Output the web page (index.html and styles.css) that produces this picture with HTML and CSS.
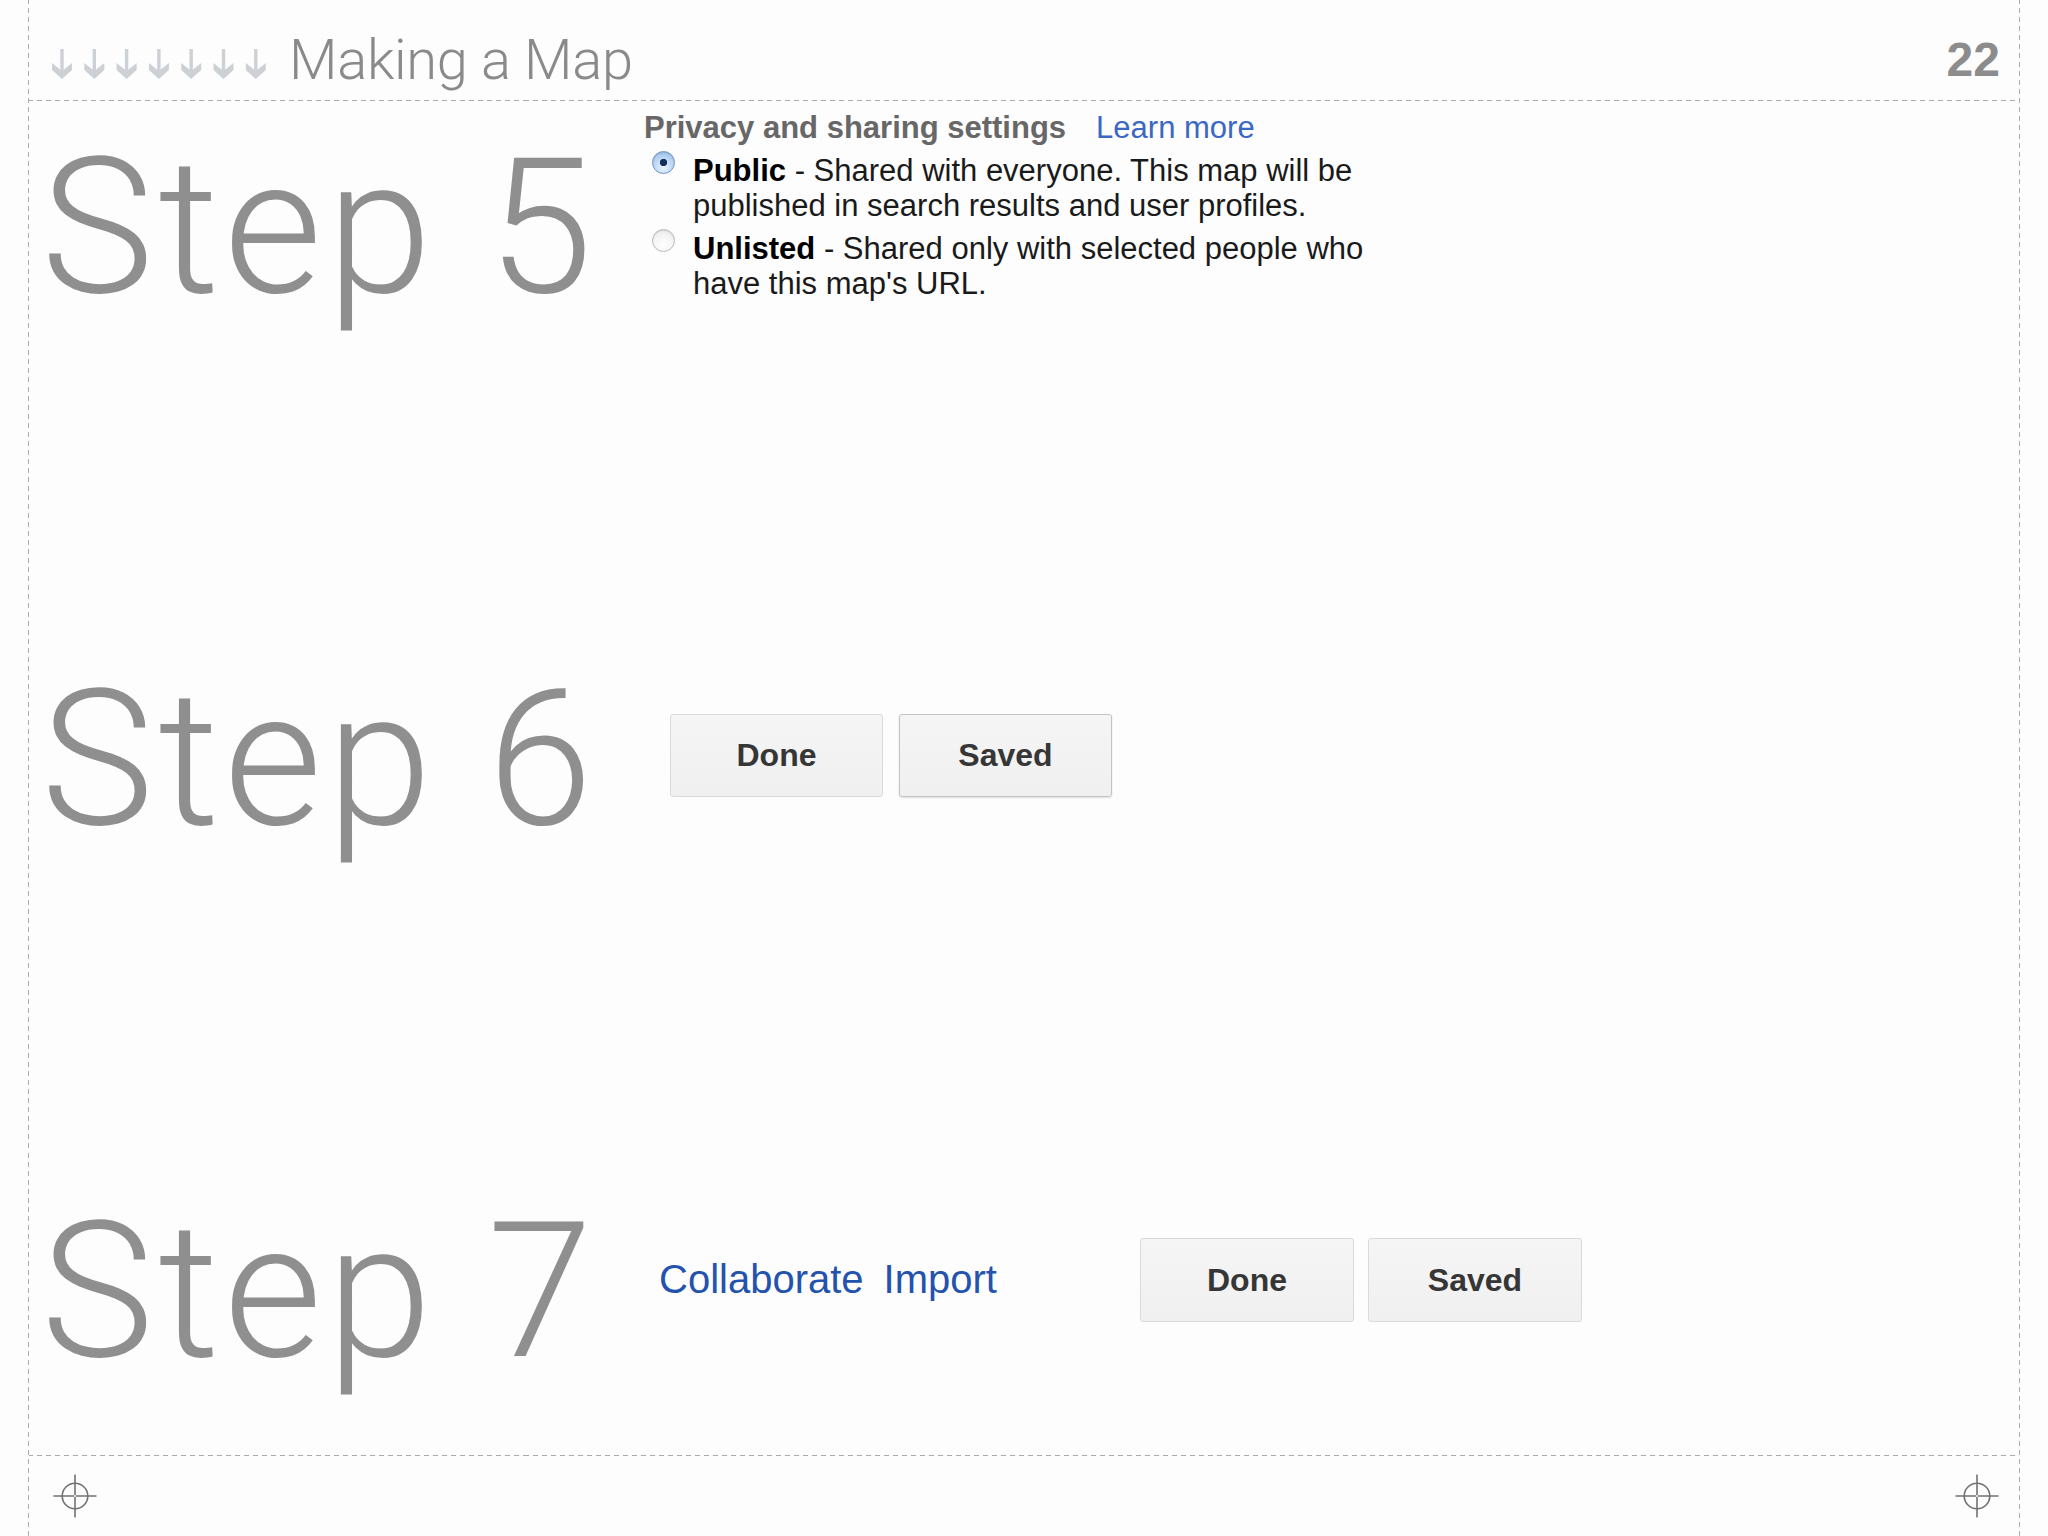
FILE: index.html
```html
<!DOCTYPE html>
<html lang="en">
<head>
<meta charset="utf-8">
<title>Making a Map — 22</title>
<link rel="stylesheet" href="styles.css">
</head>
<body>
<div class="slide">
  <header class="header">
    <svg class="arrows" width="214" height="30" viewBox="0 0 214 30" aria-hidden="true">
      <defs>
        <g id="arr">
          <rect x="8.3" y="0" width="3.4" height="25" />
          <polygon points="0,14 10,22 20,14 20,21 10,30 0,21" />
        </g>
      </defs>
      <g fill="#cdd1d6">
        <use href="#arr" x="0"/>
        <use href="#arr" x="32.3"/>
        <use href="#arr" x="64.6"/>
        <use href="#arr" x="96.9"/>
        <use href="#arr" x="129.2"/>
        <use href="#arr" x="161.5"/>
        <use href="#arr" x="193.8"/>
      </g>
    </svg>
    <h1 class="title">Making a Map</h1>
    <div class="page-num">22</div>
  </header>

  <main class="content">
    <section class="row row-5">
      <div class="label">Step 5</div>
      <div class="privacy">
        <div class="privacy-head"><span>Privacy and sharing settings</span><a class="learn">Learn more</a></div>
        <div class="option">
          <span class="radio checked"></span>
          <div class="option-text">
            <span class="line"><b>Public</b><span> - Shared with everyone. This map will be</span></span>
            <span class="line">published in search results and user profiles.</span>
          </div>
        </div>
        <div class="option">
          <span class="radio"></span>
          <div class="option-text">
            <span class="line"><b>Unlisted</b><span> - Shared only with selected people who</span></span>
            <span class="line">have this map's URL.</span>
          </div>
        </div>
      </div>
    </section>

    <section class="row row-6">
      <div class="label">Step 6</div>
      <div class="buttons buttons-6">
        <button class="btn">Done</button>
        <button class="btn btn-saved">Saved</button>
      </div>
    </section>

    <section class="row row-7">
      <div class="label">Step 7</div>
      <div class="step7">
        <div class="links">
          <a class="link">Collaborate</a>
          <a class="link">Import</a>
        </div>
        <div class="buttons buttons-7">
          <button class="btn">Done</button>
          <button class="btn">Saved</button>
        </div>
      </div>
    </section>
  </main>

  <footer class="footer">
    <svg class="cross" width="44" height="44" viewBox="0 0 44 44" aria-hidden="true">
      <circle cx="22" cy="22" r="12.8" fill="none" stroke="#727272" stroke-width="1.6"/>
      <path d="M22 0.5v43M0.5 22h43" stroke="#727272" stroke-width="1.6"/>
      <circle cx="22" cy="22" r="1" fill="#fdfdfd"/>
    </svg>
    <svg class="cross" width="44" height="44" viewBox="0 0 44 44" aria-hidden="true">
      <circle cx="22" cy="22" r="12.8" fill="none" stroke="#727272" stroke-width="1.6"/>
      <path d="M22 0.5v43M0.5 22h43" stroke="#727272" stroke-width="1.6"/>
      <circle cx="22" cy="22" r="1" fill="#fdfdfd"/>
    </svg>
  </footer>
</div>
</body>
</html>
```

FILE: styles.css
```css
* {
  box-sizing: border-box;
}

html, body {
  margin: 0;
  padding: 0;
  background: #fdfdfd;
}

body {
  width: 2048px;
  height: 1536px;
  overflow: hidden;
  font-family: "Liberation Sans", Arial, sans-serif;
}

.slide {
  margin-left: 28px;
  width: 1992px;
  height: 1536px;
  border-style: solid;
  border-width: 0 1px;
  border-image: repeating-linear-gradient(to bottom, #ababab 0 5px, transparent 5px 9px) 1;
  display: flex;
  flex-direction: column;
}

/* ---------- header ---------- */
.header {
  height: 101px;
  flex: none;
  border-style: solid;
  border-width: 0 0 1px 0;
  border-image: repeating-linear-gradient(to right, #ababab 0 5px, transparent 5px 9px) 1;
  display: flex;
  align-items: baseline;
  padding: 32px 19px 0 23px;
}

.arrows {
  flex: none;
  margin-bottom: 6px;
  margin-right: 23px;
}

.title {
  margin: 0;
  font-family: Roboto, "Liberation Sans", sans-serif;
  font-weight: 300;
  font-size: 56px;
  line-height: 56px;
  color: #8a8a8a;
  letter-spacing: -0.3px;
}

.page-num {
  margin-left: auto;
  align-self: flex-start;
  margin-top: 4px;
  font-family: "Liberation Sans", Arial, sans-serif;
  font-weight: bold;
  font-size: 48px;
  line-height: 48px;
  color: #8c8c8c;
}

/* ---------- rows ---------- */
.content {
  flex: none;
  display: flex;
  flex-direction: column;
}

.row {
  display: flex;
  align-items: flex-start;
}

.row-5, .row-6 {
  height: 532px;
}

.row-7 {
  height: 290px;
}

.label {
  flex: none;
  width: 615px;
  margin-top: 26px;
  padding-left: 12px;
  font-family: Roboto, "Liberation Sans", sans-serif;
  font-weight: 300;
  font-size: 190px;
  line-height: 200px;
  letter-spacing: 4.5px;
  color: #8f8f8f;
  white-space: nowrap;
}

/* ---------- step 5: privacy ---------- */
.privacy {
  margin-top: 9px;
  font-size: 31px;
  line-height: 35px;
  color: #1a1a1a;
}

.privacy-head {
  font-weight: bold;
  color: #676767;
}

.learn {
  margin-left: 30px;
  font-weight: normal;
  color: #3a68c4;
}

.option {
  display: flex;
  align-items: flex-start;
  margin-top: 8px;
}

.option-text {
  display: flex;
  flex-direction: column;
  white-space: nowrap;
}

.line {
  display: block;
}

.option-text b {
  color: #000;
}

.radio {
  flex: none;
  width: 23px;
  height: 23px;
  margin: -2px 18px 0 8px;
  border-radius: 50%;
  border: 1px solid #b9b9b9;
  background: radial-gradient(circle at 50% 70%, #ffffff 0%, #f4f4f4 55%, #e2e2e2 100%);
  box-shadow: inset 0 1px 1px rgba(0, 0, 0, 0.08);
}

.radio.checked {
  border-color: #6f93c4;
  background:
    radial-gradient(circle at 50% 50%, #16305e 0 3.4px, transparent 3.9px),
    radial-gradient(circle at 50% 75%, #e8f3ff 0%, #b9d5f3 55%, #8fb4e2 100%);
}

/* ---------- buttons ---------- */
.buttons {
  display: flex;
}

.buttons-6 {
  margin-left: 26px;
  margin-top: 81px;
  gap: 16px;
}

.buttons-7 {
  gap: 14px;
}

.btn {
  width: 213px;
  height: 83px;
  padding: 0;
  border: 1px solid #dadada;
  border-radius: 3px;
  background: linear-gradient(#f5f5f5, #f0f0f0);
  font-family: "Liberation Sans", Arial, sans-serif;
  font-weight: bold;
  font-size: 32px;
  color: #363636;
}

.btn-saved {
  border-color: #c3c3c3;
  box-shadow: 0 1px 2px rgba(0, 0, 0, 0.12);
}

.buttons-7 .btn {
  height: 84px;
  width: 214px;
}

/* ---------- step 7 ---------- */
.step7 {
  margin-top: 73px;
  margin-left: 15px;
  height: 84px;
  display: flex;
  align-items: center;
}

.links {
  width: 481px;
  display: flex;
  gap: 20px;
  padding-bottom: 2px;
}

.link {
  font-family: "Liberation Sans", Arial, sans-serif;
  font-size: 40px;
  line-height: 46px;
  color: #2453ae;
}

/* ---------- footer ---------- */
.footer {
  flex: none;
  height: 81px;
  border-style: solid;
  border-width: 1px 0 0 0;
  border-image: repeating-linear-gradient(to right, #ababab 0 5px, transparent 5px 9px) 1;
  display: flex;
  justify-content: space-between;
  align-items: flex-start;
  padding: 18px 20px 0 24px;
}

.cross {
  flex: none;
}
```
